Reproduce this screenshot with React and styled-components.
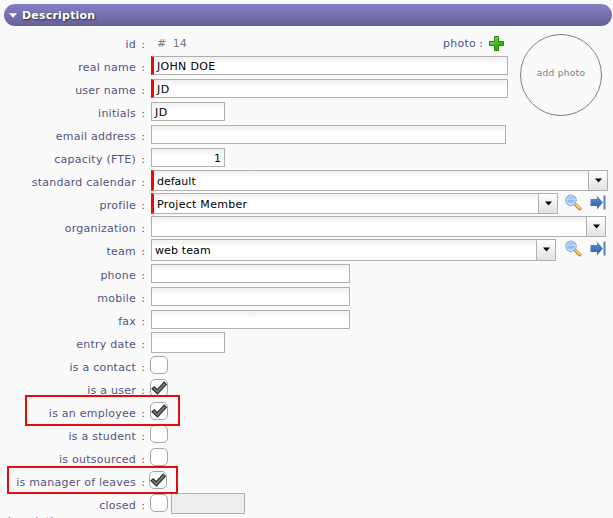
import React from "react";
import styled, { createGlobalStyle } from "styled-components";

const Global = createGlobalStyle`
  * { box-sizing: border-box; }
  body { margin: 0; background: #fafafa; overflow: hidden; }
`;

const Page = styled.main`
  position: relative;
  width: 613px;
  height: 518px;
  overflow: hidden;
  padding: 4px 0 0 4px;
  background: #fafafa;
  font: 11px/14px Verdana, "DejaVu Sans", sans-serif;
  color: #545381;
`;

const TitleBar = styled.header`
  display: flex;
  align-items: center;
  gap: 5px;
  width: 608px;
  height: 22px;
  margin-bottom: 6px;
  padding-left: 5px;
  border-radius: 11px;
  background: linear-gradient(#8681c5, #655f9b);
  color: #fff;
  font-weight: bold;
  text-shadow: 1px 1px 2px #333;
`;

const Title = styled.span`
  padding-top: 1px;
  letter-spacing: 0.2px;
`;

const Row = styled.div`
  display: flex;
  align-items: flex-start;
  height: ${(p) => p.$h || 23}px;
`;

const Label = styled.label`
  display: flex;
  justify-content: flex-end;
  width: 141px;
  margin-right: 6px;
  padding-top: 6px;
  white-space: nowrap;
`;

const Text = styled.span`
  letter-spacing: 0.24px;
`;

const Value = styled.span`
  letter-spacing: ${(p) => p.$ls || 0}px;
`;

const Colon = styled.span`
  width: 9px;
  text-align: right;
`;

const Field = styled.div`
  width: ${(p) => p.$w}px;
  height: ${(p) => p.$h || 19}px;
  margin-top: ${(p) => (p.$h ? 0 : 1)}px;
  padding: 3px 3px 0;
  border: 1px solid #b0b0b0;
  ${(p) => p.$required && "border-left: 3px solid #f00;"}
  background: ${(p) => (p.$disabled ? "#efefef" : "linear-gradient(#f0f0f0, #fff 7px)")};
  color: #000;
  text-align: ${(p) => (p.$right ? "right" : "left")};
  white-space: nowrap;
`;

const Select = styled.div`
  display: flex;
  width: ${(p) => p.$w}px;
  height: ${(p) => p.$h || 21}px;
  border: 1px solid #b0b0b0;
  ${(p) => p.$required && "border-left: 3px solid #f00;"}
  background: linear-gradient(#f0f0f0, #fff 7px);
  color: #000;
`;

const SelectValue = styled.span`
  flex: 1;
  padding: 4px 0 0 3px;
`;

const Arrow = styled.span`
  display: flex;
  justify-content: center;
  width: 19px;
  padding-top: 7px;
  border-left: 1px solid #b0b0b0;
  background: linear-gradient(#fff, #e2e2e2);
`;

const Check = styled.span`
  display: flex;
  flex: none;
  width: 18px;
  height: 18px;
  margin: 1px 0 0 ${(p) => (p.$shift ? -2 : -1)}px;
  border: 1px solid #a6a6a6;
  border-radius: 5px;
  background: #fff;
`;

const ClosedDate = styled(Field)`
  margin-left: 3px;
`;

const Identifier = styled.span`
  width: 292px;
  padding: 5px 0 0 6px;
  color: #777;
  word-spacing: 3px;
`;

const PhotoLabel = styled.span`
  display: flex;
  width: 40px;
  padding-top: 5px;
  white-space: nowrap;
`;

const PhotoAdd = styled.span`
  display: flex;
  padding-top: 4px;
  margin: 0 16px 0 6px;
`;

const Photo = styled.div`
  display: flex;
  flex: none;
  justify-content: center;
  width: 82px;
  height: 82px;
  margin-top: 2px;
  padding-top: 32px;
  border: 1px solid #808080;
  border-radius: 50%;
  color: #808080;
  font-size: 9px;
  line-height: 12px;
  letter-spacing: 0.3px;
`;

const Tools = styled.span`
  display: flex;
  gap: 8px;
  margin: 1px 0 0 ${(p) => p.$ml}px;
`;

const SectionLabel = styled.div`
  margin-top: -1px;
`;

const Highlight = styled.div`
  position: absolute;
  left: ${(p) => p.$x}px;
  top: ${(p) => p.$y}px;
  width: ${(p) => p.$w}px;
  height: ${(p) => p.$h}px;
  border: 2px solid #e60c0c;
`;

const Chevron = () => (
  <svg width="7" height="5"><path d="M0 .5h7L3.5 4.5z" fill="#000" /></svg>
);

const Tick = () => (
  <svg width="16" height="16" viewBox="0 0 16 16">
    <path d="M1 8.8L3.3 6.8 6.2 9.7 13.2 2.2 15.3 4.3 6.5 14z" fill="#777" stroke="#303030" strokeWidth="1.2" />
  </svg>
);

const Plus = () => (
  <svg width="15" height="15">
    <defs>
      <linearGradient id="plus" x1="0" y1="0" x2="1" y2="1">
        <stop offset="0" stopColor="#a5e58b" />
        <stop offset=".55" stopColor="#35b814" />
        <stop offset="1" stopColor="#23a009" />
      </linearGradient>
    </defs>
    <path d="M5.5.5h4v5h5v4h-5v5h-4v-5h-5v-4h5z" fill="url(#plus)" stroke="#25820d" />
  </svg>
);

const Magnifier = () => (
  <svg width="17" height="17">
    <defs>
      <linearGradient id="lens" x1="0" y1="0" x2="0" y2="1">
        <stop offset="0" stopColor="#75aff5" />
        <stop offset=".45" stopColor="#b4d8fc" />
        <stop offset=".55" stopColor="#72b8f8" />
        <stop offset="1" stopColor="#c9f3ff" />
      </linearGradient>
    </defs>
    <path d="M10.5 10.500l4.200 4.200" stroke="#c98a35" strokeWidth="3.400" strokeLinecap="round" />
    <path d="M10.800 10.300l3.900 3.900" stroke="#ffd65a" strokeWidth="1.800" strokeLinecap="round" />
    <circle cx="6" cy="6.2" r="5.200" fill="url(#lens)" stroke="#8f9fc8" strokeWidth="1.100" />
    <circle cx="6" cy="6.2" r="4.200" fill="none" stroke="#d8eaff" strokeWidth=".8" />
  </svg>
);

const GoTo = () => (
  <svg width="16" height="17">
    <defs>
      <linearGradient id="go" x1="0" y1="0" x2="0" y2="1">
        <stop offset="0" stopColor="#5b8ecb" />
        <stop offset="1" stopColor="#2c61a4" />
      </linearGradient>
    </defs>
    <path d="M.5 5h6.500v-3.200l6 6.700-6 6.700V12h-6.500z" fill="url(#go)" />
    <path d="M14.500 1.500v14" stroke="#5583bb" strokeWidth="2" />
  </svg>
);

const Caption = ({ text }) => (
  <Label><Text>{text}</Text><Colon>:</Colon></Label>
);

const Lookup = ({ ml }) => <Tools $ml={ml}><Magnifier /><GoTo /></Tools>;

const Choice = ({ value, w, h, required, ls }) => (
  <Select $w={w} $h={h} $required={required}>
    <SelectValue><Value $ls={ls}>{value}</Value></SelectValue>
    <Arrow><Chevron /></Arrow>
  </Select>
);

export default function App() {
  return (
    <>
      <Global />
      <Page>
        <TitleBar>
          <svg width="8" height="5"><path d="M0 .3h8L4 4.700z" fill="#fff" /></svg>
          <Title>Description</Title>
        </TitleBar>
        <Row>
          <Caption text="id" />
          <Identifier># 14</Identifier>
          <PhotoLabel><Text>photo</Text><Colon>:</Colon></PhotoLabel>
          <PhotoAdd><Plus /></PhotoAdd>
          <Photo>add photo</Photo>
        </Row>
        <Row><Caption text="real name" /><Field $w={357} $required><Value $ls={0.3}>JOHN DOE</Value></Field></Row>
        <Row><Caption text="user name" /><Field $w={357} $required><Value $ls={0.4}>JD</Value></Field></Row>
        <Row><Caption text="initials" /><Field $w={74}><Value $ls={0.4}>JD</Value></Field></Row>
        <Row><Caption text="email address" /><Field $w={355} /></Row>
        <Row><Caption text="capacity (FTE)" /><Field $w={74} $right>1</Field></Row>
        <Row><Caption text="standard calendar" /><Choice value="default" w={457} required /></Row>
        <Row><Caption text="profile" /><Choice value="Project Member" ls={0.28} w={407} required /><Lookup ml={7} /></Row>
        <Row><Caption text="organization" /><Choice w={455} /></Row>
        <Row $h={24}><Caption text="team" /><Choice value="web team" ls={0.12} w={405} h={22} /><Lookup ml={9} /></Row>
        <Row><Caption text="phone" /><Field $w={199} /></Row>
        <Row><Caption text="mobile" /><Field $w={199} /></Row>
        <Row><Caption text="fax" /><Field $w={199} /></Row>
        <Row><Caption text="entry date" /><Field $w={74} $h={21} /></Row>
        <Row><Caption text="is a contact" /><Check /></Row>
        <Row><Caption text="is a user" /><Check><Tick /></Check></Row>
        <Row><Caption text="is an employee" /><Check><Tick /></Check></Row>
        <Row><Caption text="is a student" /><Check /></Row>
        <Row><Caption text="is outsourced" /><Check /></Row>
        <Row><Caption text="is manager of leaves" /><Check $shift><Tick /></Check></Row>
        <Row><Caption text="closed" /><Check /><ClosedDate $w={74} $h={21} $disabled /></Row>
        <SectionLabel><Text>description</Text></SectionLabel>
        <Highlight $x={25} $y={395} $w={155} $h={31} />
        <Highlight $x={7} $y={466} $w={171} $h={28} />
      </Page>
    </>
  );
}
